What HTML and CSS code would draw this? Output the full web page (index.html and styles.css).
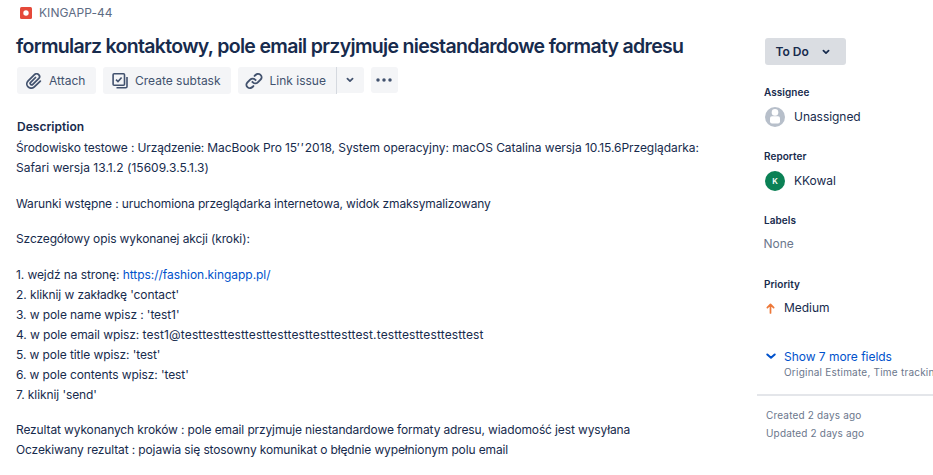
FILE: index.html
```html
<!DOCTYPE html>
<html lang="pl">
<head>
<meta charset="utf-8">
<title>KINGAPP-44</title>
<link rel="stylesheet" href="styles.css">
</head>
<body>
<div class="issue">
  <main class="content">
    <div class="breadcrumb">
      <svg class="bug" viewBox="0 0 12 12"><rect width="12" height="12" rx="1.5" fill="#e5493a"/><circle cx="6" cy="6" r="2.7" fill="#fff"/></svg>
      <span class="key">KINGAPP-44</span>
    </div>
    <h1 class="title">formularz kontaktowy, pole email przyjmuje niestandardowe formaty adresu</h1>
    <div class="toolbar">
      <button class="btn attach"><svg class="icon clip" viewBox="3 3 18 18"><path d="M11.643 17.965c-1.53 1.495-4.016 1.496-5.542.004a3.773 3.773 0 0 1 .002-5.412l7.147-6.985a2.316 2.316 0 0 1 3.239-.008 2.198 2.198 0 0 1 .008 3.166l-6.528 6.38a.748.748 0 0 1-1.044.006.689.689 0 0 1-.008-.995l5.483-5.359a.974.974 0 0 0 .015-1.376 1.013 1.013 0 0 0-1.421-.02l-5.485 5.36a2.636 2.636 0 0 0 .013 3.765 2.763 2.763 0 0 0 3.855 0l6.527-6.378a4.143 4.143 0 0 0-.015-5.948c-1.673-1.635-4.364-1.635-6.048.011l-7.146 6.986a5.718 5.718 0 0 0-.003 8.203c2.311 2.26 6.052 2.26 8.37-.008l6.766-6.61a.972.972 0 0 0 .01-1.376 1.012 1.012 0 0 0-1.42-.009l-6.775 6.602z"/></svg><span>Attach</span></button>
      <button class="btn subtask"><svg class="icon line" viewBox="0 0 18 18"><rect x="2.1" y="1.8" width="11.4" height="11.4" rx="1"/><path d="M5 7.6l2 2 3.6-4.1M5.5 15.8h9.2c.8 0 1.3-.5 1.3-1.3V5"/></svg><span>Create subtask</span></button>
      <div class="split">
        <button class="btn link"><svg class="icon" viewBox="2.5 3 19 19"><path d="M12.856 5.457l-.937.92a1.002 1.002 0 0 0 0 1.437 1.047 1.047 0 0 0 1.463 0l.984-.966c.967-.95 2.542-1.135 3.602-.288a2.54 2.54 0 0 1 .203 3.81l-2.903 2.852a2.646 2.646 0 0 1-3.696 0l-1.11-1.09L9 13.57l1.108 1.089c1.822 1.788 4.802 1.788 6.622 0l2.905-2.852a4.558 4.558 0 0 0-.357-6.82c-1.893-1.517-4.695-1.226-6.422.47"/><path d="M11.144 19.543l.937-.92a1.002 1.002 0 0 0 0-1.437 1.047 1.047 0 0 0-1.462 0l-.985.966c-.967.95-2.542 1.135-3.602.288a2.54 2.54 0 0 1-.203-3.81l2.903-2.852a2.646 2.646 0 0 1 3.696 0l1.11 1.09L15 11.43l-1.108-1.089c-1.822-1.788-4.802-1.788-6.622 0l-2.905 2.852a4.558 4.558 0 0 0 .357 6.82c1.893 1.517 4.695 1.226 6.422-.47"/></svg><span>Link issue</span></button>
        <button class="btn drop"><svg class="chev" viewBox="0 0 8 6"><path d="M1.4 1.6L4 4.2l2.6-2.6"/></svg></button>
      </div>
      <button class="btn more"><svg class="dots" viewBox="0 0 16 4"><circle cx="2" cy="2" r="1.75"/><circle cx="8" cy="2" r="1.75"/><circle cx="14" cy="2" r="1.75"/></svg></button>
    </div>
    <h2 class="heading">Description</h2>
    <div class="description">
      <p>Środowisko testowe : Urządzenie: MacBook Pro 15<span class="marks">′′</span><span class="specs">2018, System operacyjny: macOS Catalina wersja 10.15.6Przeglądarka:</span><br><span class="version">Safari wersja 13.1.2 (15609.3.5.1.3)</span></p>
      <p>Warunki wstępne : uruchomiona przeglądarka internetowa, widok zmaksymalizowany</p>
      <p>Szczegółowy opis wykonanej akcji (kroki):</p>
      <p class="steps">1. wejdź na stronę: <a href="#">https://fashion.kingapp.pl/</a><br>2. kliknij w zakładkę 'contact'<br>3. w pole name wpisz : 'test1'<br>4. w pole email wpisz: <span class="email">test1@testtesttesttesttesttesttesttesttest.testtesttesttesttest</span><br>5. w pole title wpisz: 'test'<br>6. w pole contents wpisz: 'test'<br>7. kliknij 'send'</p>
      <p>Rezultat wykonanych kroków : pole email przyjmuje niestandardowe formaty adresu, wiadomość jest wysyłana<br>Oczekiwany rezultat : pojawia się stosowny komunikat o błędnie wypełnionym polu email</p>
    </div>
  </main>
  <aside class="side">
    <button class="status"><span>To Do</span><svg class="chev" viewBox="0 0 8 6"><path d="M1.4 1.6L4 4.2l2.6-2.6"/></svg></button>
    <section class="field">
      <h3>Assignee</h3>
      <div class="value"><svg class="avatar" viewBox="0 0 20 20"><circle cx="10" cy="10" r="10" fill="#b7bfca"/><circle cx="10" cy="5.4" r="3.3" fill="#fff"/><rect x="5" y="9.3" width="10" height="7.2" rx="2" fill="#fff"/></svg><span>Unassigned</span></div>
    </section>
    <section class="field">
      <h3>Reporter</h3>
      <div class="value"><span class="avatar initial">K</span><span>KKowal</span></div>
    </section>
    <section class="field">
      <h3>Labels</h3>
      <div class="value none">None</div>
    </section>
    <section class="field">
      <h3>Priority</h3>
      <div class="value priority"><svg class="arrow" viewBox="0 0 10 12"><path d="M5 11V2M1.5 5L5 1.5 8.5 5"/></svg><span>Medium</span></div>
    </section>
    <div class="show-more">
      <svg class="chev" viewBox="0 0 10 7"><path d="M1.3 1.5L5 4.8l3.7-3.3"/></svg>
      <div><a href="#">Show 7 more fields</a><div class="hint">Original Estimate, Time tracking</div></div>
    </div>
    <div class="dates"><div>Created 2 days ago</div><div>Updated 2 days ago</div></div>
  </aside>
</div>
</body>
</html>
```
FILE: styles.css
```css
* { box-sizing: border-box; }
body { margin: 0; width: 933px; height: 475px; overflow: hidden; background: #fff; color: #172b4d; font: 12px/20px Inter, "Liberation Sans", sans-serif; }
h1, h2, h3, p { margin: 0; }
a { color: #0052cc; text-decoration: none; }
button { border: 0; padding: 0; margin: 0; font: inherit; color: inherit; }
svg { display: block; flex: none; }
.issue { display: flex; height: 475px; }
.content { width: 757px; flex: none; padding: 3px 0 0 16px; white-space: nowrap; }
.breadcrumb { display: flex; align-items: center; height: 20px; padding-left: 4px; gap: 7px; color: #5e6c84; letter-spacing: 0.05px; }
.bug { width: 12px; height: 12px; }
.title { font-size: 19.5px; line-height: 24px; font-weight: 600; letter-spacing: -0.68px; margin-top: 11px; }
.toolbar { display: flex; height: 27px; margin: 9px 0 0 1px; }
.btn { display: flex; align-items: center; height: 27px; background: #f4f5f7; border-radius: 3px; color: #42526e; }
.icon { width: 18px; height: 18px; fill: currentColor; }
.clip { width: 16px; height: 16px; margin: 0 1px; }
.line { fill: none; stroke: currentColor; stroke-width: 1.6; }
.attach { width: 79px; padding-left: 8px; gap: 6px; margin-right: 7px; }
.subtask { width: 128px; padding-left: 8px; gap: 6px; margin-right: 7px; }
.split { display: flex; margin-right: 7px; gap: 1px; background: linear-gradient(#d5d9df, #d5d9df) 98px 0 / 1px 27px no-repeat; }
.link { width: 98px; padding-left: 7px; gap: 6.5px; border-radius: 3px 0 0 3px; }
.drop { width: 27px; height: 26px; justify-content: center; padding-right: 2px; border-radius: 0 3px 3px 0; }
.more { width: 27px; height: 26px; justify-content: center; padding-right: 1px; }
.chev { width: 8px; height: 6px; fill: none; stroke: currentColor; stroke-width: 1.7; stroke-linecap: round; stroke-linejoin: round; }
.dots { width: 16px; height: 4px; fill: currentColor; }
.heading { font-size: 12px; line-height: 20px; font-weight: 600; margin: 23px 0 0 1px; letter-spacing: 0.03px; }
.description { display: grid; gap: 15.5px; margin-top: 1px; letter-spacing: -0.13px; }
.description a { letter-spacing: -0.04px; }
.steps { letter-spacing: -0.09px; }
.marks { letter-spacing: 1.3px; }
.specs { letter-spacing: -0.06px; }
.version { letter-spacing: 0.03px; }
.email { letter-spacing: 0.14px; }
.side { flex: 1; min-width: 0; padding-top: 38px; white-space: nowrap; overflow: hidden; }
.status { display: flex; align-items: center; width: 81px; height: 27px; margin-left: 8px; padding-left: 10.5px; gap: 13.5px; border-radius: 3px; background: #dadde2; font-weight: 600; }
.field { height: 64px; padding-left: 7px; }
.status + .field { margin-top: 19px; }
.field h3 { font-size: 10px; line-height: 16px; font-weight: 600; letter-spacing: 0.05px; }
.value { display: flex; align-items: center; height: 20px; margin-top: 7px; padding-left: 1px; gap: 9px; letter-spacing: -0.05px; }
.avatar { width: 20px; height: 20px; }
.initial { border-radius: 50%; background: #0b8155; color: #fff; font-size: 8px; font-weight: 600; text-align: center; line-height: 20px; }
.none { padding: 0; margin-left: -0.5px; margin-top: 6px; color: #6b778c; }
.priority { padding-left: 2px; gap: 9px; margin-top: 6px; }
.arrow { width: 9px; height: 11px; fill: none; stroke: #ed7839; stroke-width: 1.9; stroke-linecap: round; stroke-linejoin: round; }
.show-more { display: flex; gap: 8px; margin-top: 7px; padding-left: 9px; height: 49px; border-bottom: 2px solid #e4e6ea; }
.show-more .chev { width: 10px; height: 7px; margin-top: 6px; color: #0052cc; stroke-width: 2; }
.show-more a { display: block; line-height: 20px; letter-spacing: -0.03px; }
.hint { font-size: 10px; line-height: 11px; color: #6b778c; letter-spacing: 0.22px; }
.dates { padding: 10px 0 0 9px; font-size: 10px; line-height: 18px; color: #6b778c; letter-spacing: 0.17px; }
```
